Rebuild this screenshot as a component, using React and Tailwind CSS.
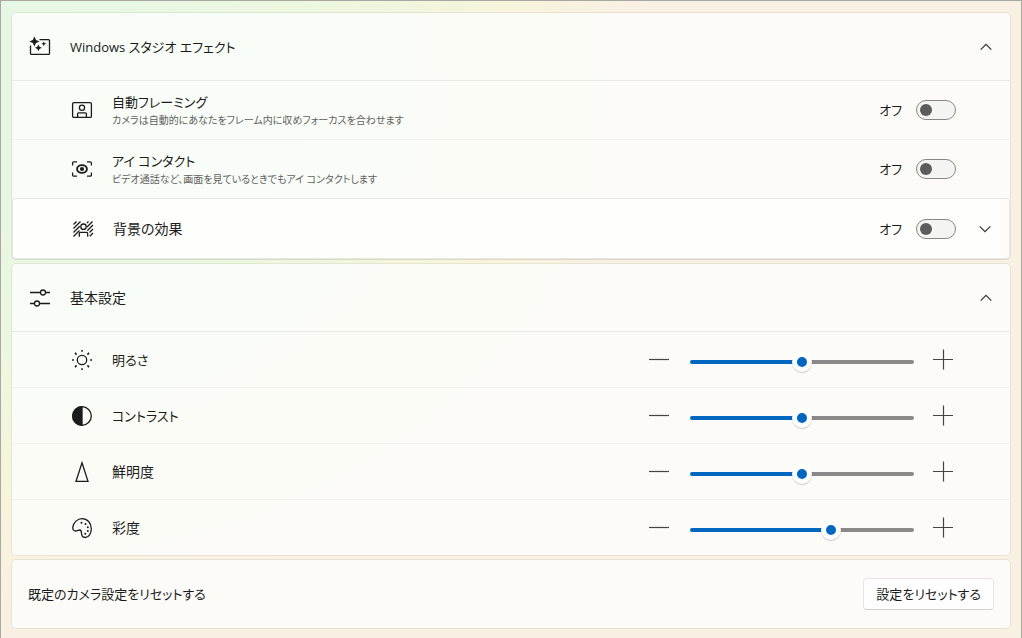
import React, { useState } from 'react';
import clsx from 'clsx';

const Icon = ({ children }) => (
  <svg
    width="22"
    height="22"
    viewBox="0 0 22 22"
    fill="none"
    stroke="#1b1b1b"
    strokeWidth="1.3"
    className="shrink-0"
    aria-hidden="true"
  >
    {children}
  </svg>
);

const StudioIcon = () => (
  <Icon>
    <path d="M10.5 3.6h9a1 1 0 0 1 1 1v12.8a1 1 0 0 1-1 1h-17a1 1 0 0 1-1-1V9.5" />
    <g fill="#1b1b1b" stroke="none">
      <path d="M5.4.4 7 3.9l3.5 1.5L7 7l-1.6 3.6L3.8 7 .4 5.4l3.4-1.5z" />
      <path d="m9.4 8.4 1.1 2.3 2.3 1.1-2.3 1.1-1.1 2.3-1.1-2.3L6 11.8l2.3-1.1z" />
      <path d="m14.8 5.4.7 1.7 1.7.7-1.7.7-.7 1.7-.7-1.7-1.7-.7 1.7-.7z" />
    </g>
  </Icon>
);

const FramingIcon = () => (
  <Icon>
    <rect x="1.6" y="3.6" width="18.8" height="14.8" rx="1.2" />
    <circle cx="11" cy="8.7" r="2.6" />
    <path d="M6.6 18v-3.2a1 1 0 0 1 1-1h6.8a1 1 0 0 1 1 1V18" />
  </Icon>
);

const EyeIcon = () => (
  <Icon>
    <path d="M1.6 7.5V5a1.2 1.2 0 0 1 1.2-1.2H6M16 3.8h3.2A1.2 1.2 0 0 1 20.4 5v2.5M20.4 14.5V17a1.2 1.2 0 0 1-1.2 1.2H16M6 18.2H2.8A1.2 1.2 0 0 1 1.6 17v-2.5" />
    <ellipse cx="11" cy="11" rx="4.9" ry="3.9" strokeWidth="1.9" />
    <circle cx="11" cy="11" r="2.1" fill="#1b1b1b" stroke="none" />
  </Icon>
);

const BackgroundIcon = () => (
  <Icon>
    <path d="m1.5 6.5 3-3M1.5 10.5l7-7M1.5 14.5l6.3-6.3M1.5 18.5l6-6M14.9 5.1l1.6-1.6M15 9l5.5-5.5M15.3 12.7 21 7M17.5 14.5 21 11M17.8 18.2 21 15" />
    <circle cx="11.5" cy="8.7" r="2.7" />
    <path d="M7.3 18.8v-3.3a1.2 1.2 0 0 1 1.2-1.2h6a1.2 1.2 0 0 1 1.2 1.2v3.3" />
  </Icon>
);

const SlidersIcon = () => (
  <Icon>
    <path d="M1 5.5h10.3M16.7 5.5H21M1 16.5h4.3M10.7 16.5H21" />
    <circle cx="14" cy="5.5" r="2.5" />
    <circle cx="8" cy="16.5" r="2.5" />
  </Icon>
);

const SunIcon = () => (
  <Icon>
    <circle cx="11" cy="11" r="4.7" />
    <path
      strokeWidth="1.5"
      d="M11 1v1.8M11 19.2V21M1 11h1.8M19.2 11H21M3.9 3.9l1.7 1.7M16.4 16.4l1.7 1.7M3.9 18.1l1.7-1.7M16.4 5.6l1.7-1.7"
    />
  </Icon>
);

const ContrastIcon = () => (
  <Icon>
    <circle cx="11" cy="11" r="9.3" />
    <path d="M11 1.7a9.3 9.3 0 0 0 0 18.6z" fill="#1b1b1b" />
  </Icon>
);

const SharpnessIcon = () => (
  <Icon>
    <path d="M11 1.8 17 20.4H5z" />
  </Icon>
);

const PaletteIcon = () => (
  <Icon>
    <path d="M1.8 10.2C2.6 5.3 6.4 1.7 11 1.7c5.3 0 9.3 4.3 9.3 10 0 5-2.5 8.8-6 8.8-2.6 0-3.8-1.7-3.8-4.2 0-2.3-.2-3.3-1.8-3.3-1.3 0-2.2 1-3.9 1-2.3 0-3.3-1.7-3-3.8z" />
    <g fill="#1b1b1b" stroke="none">
      <circle cx="10.5" cy="5.7" r="1" />
      <circle cx="14.5" cy="7" r="1" />
      <circle cx="16.8" cy="10.3" r="1" />
      <circle cx="16.8" cy="14" r="1" />
      <circle cx="14.3" cy="16.7" r="1" />
    </g>
  </Icon>
);

const Chevron = ({ up }) => (
  <svg width="16" height="16" viewBox="0 0 16 16" fill="none" stroke="#333" strokeWidth="1.2" aria-hidden="true">
    <path d={up ? 'M2.7 10.7 8 5.4l5.3 5.3' : 'M2.7 5.4 8 10.7l5.3-5.3'} />
  </svg>
);

const effects = [
  {
    id: 'framing',
    title: '自動フレーミング',
    detail: 'カメラは自動的にあなたをフレーム内に収めフォーカスを合わせます',
    icon: FramingIcon,
  },
  {
    id: 'eye',
    title: 'アイ コンタクト',
    detail: 'ビデオ通話など、画面を見ているときでもアイ コンタクトします',
    icon: EyeIcon,
  },
  { id: 'background', title: '背景の効果', icon: BackgroundIcon, expandable: true },
];

// kana labels are set one step smaller than the kanji ones
const levels = [
  { id: 'brightness', title: '明るさ', icon: SunIcon, kana: true },
  { id: 'contrast', title: 'コントラスト', icon: ContrastIcon, kana: true },
  { id: 'sharpness', title: '鮮明度', icon: SharpnessIcon },
  { id: 'saturation', title: '彩度', icon: PaletteIcon },
];

const defaults = { brightness: 50, contrast: 50, sharpness: 50, saturation: 64 };

const PanelHeader = ({ icon: HeaderIcon, title, kana, open, onToggle }) => (
  <button
    type="button"
    onClick={onToggle}
    aria-expanded={open}
    className="flex h-[67px] w-full items-center gap-[19px] pr-4 pl-[17px] text-left"
  >
    <HeaderIcon />
    <span className={clsx('flex-1', kana && 'text-[13px]')}>{title}</span>
    <Chevron up={open} />
  </button>
);

const EffectRow = ({ effect, checked, onChange }) => {
  const RowIcon = effect.icon;
  return (
    <div
      className={clsx(
        'flex items-center pl-[59px]',
        effect.expandable
          ? 'h-[61px] rounded-[4px] border border-black/8 bg-[linear-gradient(to_left,#fdfcf9_9px,#fefefd_9px)] bg-clip-padding shadow-[0_1px_1px_#0000000d]'
          : 'h-[59px] border-t border-black/4 first:border-black/8'
      )}
    >
      <RowIcon />
      <label htmlFor={effect.id} className={clsx('ml-[19px] flex-1', effect.detail && 'pt-0.5')}>
        <span className={clsx('block leading-[18px]', effect.detail && 'text-[13px]')}>
          {effect.title}
        </span>
        {effect.detail && (
          <span className="block text-[10px] leading-[18px] text-[#5f5f5f]">{effect.detail}</span>
        )}
      </label>
      <span className="mr-3.5 text-[13px]">{checked ? 'オン' : 'オフ'}</span>
      <input
        id={effect.id}
        type="checkbox"
        role="switch"
        checked={checked}
        onChange={onChange}
        className="h-5 w-10 appearance-none rounded-full border border-[#868686] bg-[#f4f4f2] before:mt-[3px] before:ml-[3px] before:block before:size-3 before:rounded-full before:bg-[#5c5c5c] checked:border-[#0067c0] checked:bg-[#0067c0] checked:before:ml-[23px] checked:before:bg-white"
      />
      {effect.expandable ? (
        <button type="button" aria-label={effect.title} className="flex w-[53px] justify-end pr-4">
          <Chevron />
        </button>
      ) : (
        <div className="w-[54px]" />
      )}
    </div>
  );
};

const LevelRow = ({ level, value, onChange }) => {
  const RowIcon = level.icon;
  return (
    <div className="flex h-14 items-center border-t border-black/4 pr-[54px] pl-[59px] first:border-black/8">
      <RowIcon />
      <label htmlFor={level.id} className={clsx('ml-[19px] flex-1', level.kana && 'text-[13px]')}>
        {level.title}
      </label>
      <div className="flex items-center gap-[18px]">
        <button type="button" aria-label="-" onClick={() => onChange(Math.max(0, value - 1))}>
          <svg width="24" height="24" viewBox="0 0 24 24" stroke="#444" strokeWidth="1.2" aria-hidden="true">
            <path d="M1 11.5h20" />
          </svg>
        </button>
        <input
          id={level.id}
          type="range"
          min="0"
          max="100"
          value={value}
          onChange={(e) => onChange(Number(e.target.value))}
          style={{ '--fill': `${value}%` }}
          className="mt-1 h-5 w-56 appearance-none bg-transparent [&::-webkit-slider-runnable-track]:h-1 [&::-webkit-slider-runnable-track]:rounded-full [&::-webkit-slider-runnable-track]:bg-[linear-gradient(to_right,#0067c0_var(--fill),#8a8987_var(--fill))] [&::-webkit-slider-thumb]:-mt-2 [&::-webkit-slider-thumb]:size-5 [&::-webkit-slider-thumb]:appearance-none [&::-webkit-slider-thumb]:rounded-full [&::-webkit-slider-thumb]:border-[5px] [&::-webkit-slider-thumb]:border-white [&::-webkit-slider-thumb]:bg-[#0067c0] [&::-webkit-slider-thumb]:shadow-[0_1px_1px_#00000033]"
        />
        <button type="button" aria-label="+" onClick={() => onChange(Math.min(100, value + 1))}>
          <svg width="24" height="24" viewBox="0 0 24 24" stroke="#444" strokeWidth="1.2" aria-hidden="true">
            <path d="M1 11.5h20M11.5 1.5v20" />
          </svg>
        </button>
      </div>
    </div>
  );
};

const App = () => {
  const [effectsOpen, setEffectsOpen] = useState(true);
  const [levelsOpen, setLevelsOpen] = useState(true);
  const [enabled, setEnabled] = useState({ framing: false, eye: false, background: false });
  const [values, setValues] = useState(defaults);

  return (
    <main className="flex min-h-screen flex-col gap-[3px] border border-[#a9a9a2] bg-[#f9f0e4] bg-[radial-gradient(ellipse_65%_80%_at_0%_15%,#e7f7e4_20%,#edf7df_50%,#f7f4dc_78%,transparent_100%)] px-2.5 py-[11px] font-['Open_Sans','Noto_Sans_CJK_JP',sans-serif] text-[14px] leading-5 text-[#1b1b1b] [font-feature-settings:'palt']">
      <section className="rounded-[5px] border border-black/6 bg-[#fdfefd]/80 bg-clip-padding">
        <PanelHeader
          icon={StudioIcon}
          title="Windows スタジオ エフェクト"
          kana
          open={effectsOpen}
          onToggle={() => setEffectsOpen(!effectsOpen)}
        />
        {effectsOpen && (
          <div>
            {effects.map((effect) => (
              <EffectRow
                key={effect.id}
                effect={effect}
                checked={enabled[effect.id]}
                onChange={(e) => setEnabled({ ...enabled, [effect.id]: e.target.checked })}
              />
            ))}
          </div>
        )}
      </section>

      <section className="rounded-[5px] border border-black/6 bg-[#fdfefd]/80 bg-clip-padding">
        <PanelHeader
          icon={SlidersIcon}
          title="基本設定"
          open={levelsOpen}
          onToggle={() => setLevelsOpen(!levelsOpen)}
        />
        {levelsOpen && (
          <div>
            {levels.map((level) => (
              <LevelRow
                key={level.id}
                level={level}
                value={values[level.id]}
                onChange={(value) => setValues({ ...values, [level.id]: value })}
              />
            ))}
          </div>
        )}
      </section>

      <section className="flex h-[70px] items-center justify-between rounded-[5px] border border-black/6 bg-[#fdfefd]/80 bg-clip-padding px-4 text-[13px]">
        <span>既定のカメラ設定をリセットする</span>
        <button
          type="button"
          onClick={() => setValues(defaults)}
          className="h-8 rounded-[4px] border border-[#e8e6e2] border-b-[#d2d0cc] bg-white/80 px-3"
        >
          設定をリセットする
        </button>
      </section>
    </main>
  );
};

export default App;
